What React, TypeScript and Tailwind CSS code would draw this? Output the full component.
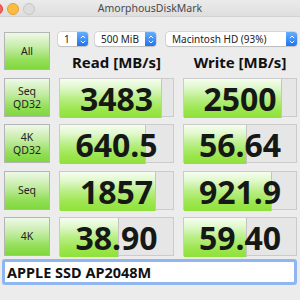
import React from "react";

const rows = [
  { l1: "Seq", l2: "QD32", r: "3483", rp: 0.9, w: "2500", wp: 0.877 },
  { l1: "4K", l2: "QD32", r: "640.5", rp: 0.765, w: "56.64", wp: 0.56 },
  { l1: "Seq", l2: "", r: "1857", rp: 0.85, w: "921.9", wp: 0.79 },
  { l1: "4K", l2: "", r: "38.90", rp: 0.52, w: "59.40", wp: 0.56 },
];

const noto = { fontFamily: '"Noto Sans", "DejaVu Sans", sans-serif' };

function GreenButton({ l1, l2, h }: { l1: string; l2?: string; h: string }) {
  return (
    <div
      className={`w-[46px] ${h} shrink-0 border border-[#b4b4b4] bg-[linear-gradient(to_bottom,#eef8e8_0%,#c4eca4_40%,#94df5a_75%,#7fd83c_100%)] flex flex-col items-center justify-center text-[10.5px] leading-[13px] text-[#222]`}
      style={noto}
    >
      <span>{l1}</span>
      {l2 ? <span>{l2}</span> : null}
    </div>
  );
}

function Meter({ value, pct, w }: { value: string; pct: number; w: string }) {
  return (
    <div className={`${w} h-[39px] shrink-0 border border-[#cbcbcb] bg-[#e6e6e6] grid`}>
      <div className="col-start-1 row-start-1 h-full flex">
        <div
          className="h-full border-r border-[#c4c4c4] bg-[linear-gradient(to_bottom,#f6fdf0_0%,#e0f8cc_22%,#b8ee84_50%,#9ce64e_78%,#8fe13b_100%)]"
          style={{ width: `${pct * 100}%` }}
        />
      </div>
      <div
        className="col-start-1 row-start-1 flex items-center justify-center text-[32px] leading-[39px] font-bold text-[#161816]"
        style={noto}
      >
        {value}
      </div>
    </div>
  );
}

function Stepper() {
  return (
    <div className="w-[11px] h-full rounded-r-[3px] bg-[linear-gradient(to_bottom,#66aefc,#1f74ee)] flex flex-col items-center justify-center gap-[1px]">
      <svg width="6" height="4" viewBox="0 0 6 4">
        <path d="M0.8 3.2 L3 1 L5.2 3.2" stroke="white" strokeWidth="1" fill="none" />
      </svg>
      <svg width="6" height="4" viewBox="0 0 6 4">
        <path d="M0.8 0.8 L3 3 L5.2 0.8" stroke="white" strokeWidth="1" fill="none" />
      </svg>
    </div>
  );
}

function Select({ label, w }: { label: string; w: string }) {
  return (
    <div
      className={`${w} h-[14px] bg-white rounded-[3px] shadow-[0_0_0_0.5px_rgba(0,0,0,0.18),0_1px_1px_rgba(0,0,0,0.12)] flex items-stretch`}
    >
      <div className="flex-1 pl-[6px] text-[10px] leading-[14px] text-[#222]" style={noto}>
        {label}
      </div>
      <Stepper />
    </div>
  );
}

export default function App() {
  return (
    <div className="w-[300px] h-[300px] overflow-hidden bg-[#ececec]">
      <div className="h-[17px] grid grid-cols-[1fr_auto_1fr] items-center border-b border-[#d2d2d2] bg-[linear-gradient(to_bottom,#ebebeb,#dedede)]">
        <div className="flex items-center gap-[4px] -ml-[9px]">
          <div className="w-[12px] h-[12px] rounded-full bg-[#fc605c] border border-[#e0443e]" />
          <div className="w-[12px] h-[12px] rounded-full bg-[#fdbc40] border border-[#dea236]" />
          <div className="w-[12px] h-[12px] rounded-full bg-[#dddddd] border border-[#c6c6c6]" />
        </div>
        <div className="text-[10.5px] leading-[17px] text-[#4a4a4a]" style={noto}>
          AmorphousDiskMark
        </div>
        <div />
      </div>

      <div className="pl-[4px] pr-[3px] pt-[15px]">
        <div className="flex items-start gap-[9px]">
          <GreenButton l1="All" h="h-[38px]" />
          <div className="w-[238px] flex flex-col">
            <div className="flex -ml-[1px] h-[14px]">
              <Select label="1" w="w-[30px]" />
              <div className="ml-[7px]">
                <Select label="500 MiB" w="w-[61px]" />
              </div>
              <div className="ml-[10px]">
                <Select label="Macintosh HD (93%)" w="w-[131px]" />
              </div>
            </div>
            <div
              className="mt-[6px] grid grid-cols-[115px_114px] gap-[9px] text-[15px] leading-[20px] font-bold text-[#111] text-center"
              style={noto}
            >
              <div>Read [MB/s]</div>
              <div>Write [MB/s]</div>
            </div>
          </div>
        </div>

        <div className="mt-[6px] flex flex-col gap-[7.3px]">
          {rows.map((r, i) => (
            <div key={i} className="flex gap-[9px] h-[39px]">
              <GreenButton l1={r.l1} l2={r.l2} h="h-[39px]" />
              <Meter value={r.r} pct={r.rp} w="w-[115px]" />
              <Meter value={r.w} pct={r.wp} w="w-[114px]" />
            </div>
          ))}
        </div>

        <div className="mt-[3px] -ml-[2px] w-[295px] h-[26px] rounded-[3px] border-[3px] border-[#90b6f0] bg-white flex items-center pl-[2px]">
          <span className="text-[14.5px] font-bold text-[#111] leading-[20px]" style={noto}>
            APPLE SSD AP2048M
          </span>
        </div>
      </div>
    </div>
  );
}
